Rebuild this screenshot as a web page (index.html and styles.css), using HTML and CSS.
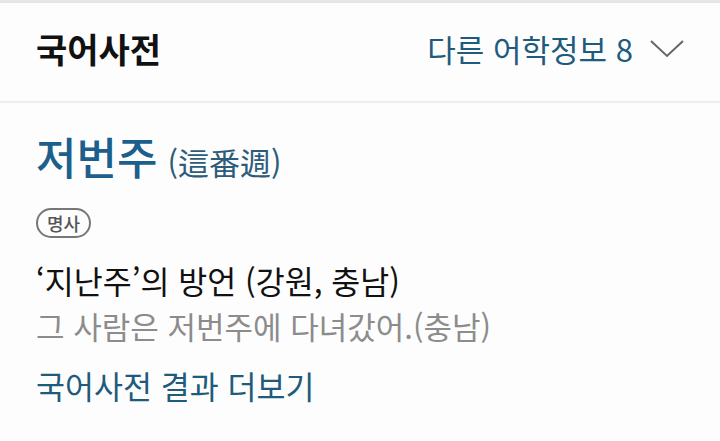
FILE: index.html
```html
<!DOCTYPE html>
<html lang="ko">
<head>
  <meta charset="UTF-8" />
  <meta name="viewport" content="width=device-width, initial-scale=1.0"/>
  <title>국어사전</title>
  <link rel="stylesheet" href="styles.css">
</head>
<body>

<div class="dict">
  <div class="dict-head">
    <h2>국어사전</h2>
    <a class="more-lang" href="#">
      다른 어학정보 8
      <svg class="chevron" width="34" height="20" viewBox="0 0 34 20">
        <path d="M1 2 L17 17 L33 2" fill="none" stroke="#666" stroke-width="2"/>
      </svg>
    </a>
  </div>

  <div class="entry">
    <div class="word">
      <span class="word-main">저번주</span>
      <span class="word-hanja">(這番週)</span>
    </div>
    <span class="pos">명사</span>
    <p class="meaning">‘지난주’의 방언 (강원, 충남)</p>
    <p class="example">그 사람은 저번주에 다녀갔어.(충남)</p>
    <a class="more-result" href="#">국어사전 결과 더보기</a>
  </div>
</div>

</body>
</html>
```

FILE: styles.css
```css
* { box-sizing: border-box; }
body {
  margin: 0;
  background: #fdfdfd;
  font-family: "Noto Sans CJK KR", "Noto Sans", sans-serif;
  color: #111;
}
a { text-decoration: none; }
.dict {
  border-top: 3px solid #e6e6e6;
}
.dict-head {
  display: flex;
  align-items: center;
  justify-content: space-between;
  height: 100px;
  padding: 0 36px 7px 36px;
  border-bottom: 2px solid #eeeeee;
}
.dict-head h2 {
  margin: 0;
  font-size: 34px;
  line-height: 44px;
  font-weight: 700;
  color: #111;
}
.more-lang {
  display: flex;
  align-items: center;
  gap: 17px;
  font-size: 31px;
  line-height: 44px;
  color: #1f5b7c;
}
.chevron { display: block; }
.entry {
  display: flex;
  flex-direction: column;
  align-items: flex-start;
  padding: 23px 36px 0;
}
.word {
  display: flex;
  align-items: baseline;
  gap: 10px;
  line-height: 60px;
}
.word-main {
  font-size: 44px;
  font-weight: 500;
  color: #1d5f8c;
}
.word-hanja {
  font-size: 31px;
  color: #2d5c7a;
}
.pos {
  margin-top: 16px;
  padding: 0 9px;
  border: 2px solid #777;
  border-radius: 16px;
  font-size: 18px;
  font-weight: 500;
  line-height: 26px;
  color: #555;
}
.meaning {
  margin: 19px 0 0;
  font-size: 31.5px;
  line-height: 46px;
  color: #111;
}
.example {
  margin: 0;
  font-size: 31px;
  line-height: 46px;
  color: #8c8c8c;
}
.more-result {
  margin-top: 13px;
  font-size: 31.5px;
  line-height: 46px;
  color: #1f5b7c;
}
```
